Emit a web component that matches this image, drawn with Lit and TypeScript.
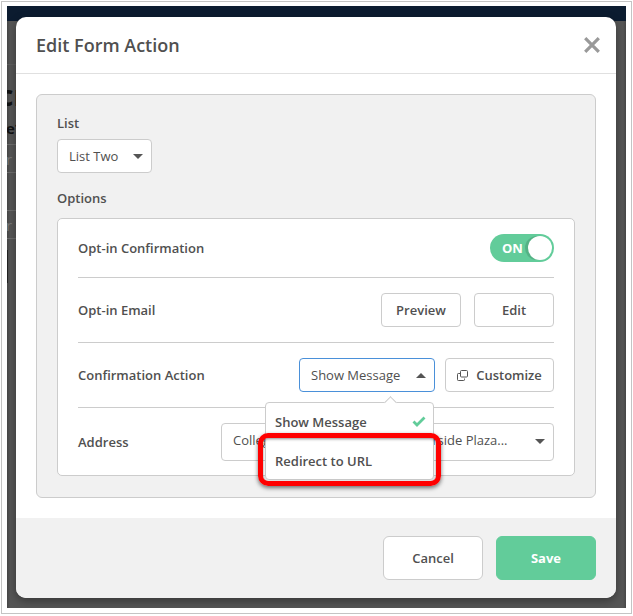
import { LitElement, css, html } from "lit";
import { customElement } from "lit/decorators.js";

const caret = (up = false) => html`<svg class="caret" width="10" height="5" viewBox="0 0 10 5"><path d=${up ? "M0 5 5 0 10 5Z" : "M0 0 5 5 10 0Z"} fill="#555"></path></svg>`;

@customElement("app-root")
export class AppRoot extends LitElement {
    static styles = css`
      :host {
        display: block;
        width: 633px;
        height: 616px;
        box-sizing: border-box;
        padding: 1px;
        background: #fff;
        font-family: "Open Sans", "Noto Sans", sans-serif;
        color: #505050;
        overflow: hidden;
      }
      .window {
        height: 613px;
        width: 631px;
        box-sizing: border-box;
        border: 1px solid #c4c4c4;
        background: #fff;
        padding: 4px 5px 5px 5px;
      }
      .backdrop {
        position: relative;
        height: 602px;
        box-sizing: border-box;
        padding: 11px 10px 10px 9px;
        background: linear-gradient(90deg, #454545, #555 3px, #555 calc(100% - 3px), #464646);
        overflow: hidden;
      }
      .navbar {
        position: absolute;
        left: 0;
        right: 0;
        top: 0;
        height: 15px;
        background: #0c1c30;
      }
      /* bits of the page behind the modal, only visible in the left gutter */
      .behind {
        position: absolute;
        white-space: nowrap;
      }
      .heading {
        left: -8px;
        top: 75px;
        font-size: 28px;
        line-height: 28px;
        font-weight: 700;
        color: #111;
      }
      .required {
        left: -1px;
        top: 113px;
        font-size: 15px;
        line-height: 18px;
        font-weight: 700;
        color: #111;
      }
      .hint {
        left: -1px;
        font-size: 15px;
        line-height: 18px;
        color: #777;
      }
      .hint-a {
        top: 144px;
      }
      .hint-b {
        top: 210px;
      }
      .rule {
        left: 0;
        width: 12px;
        height: 1px;
        background: #6c6c6c;
      }
      .r0 {
        top: 58px;
        background: #5e5e5e;
      }
      .r1 {
        top: 138px;
      }
      .r2 {
        top: 166px;
      }
      .r3 {
        top: 204px;
      }
      .r4 {
        top: 232px;
      }
      .bar {
        left: 0;
        top: 244px;
        width: 1px;
        height: 33px;
        background: #222;
      }
      .modal {
        position: relative;
        height: 581px;
        background: #fff;
        border-radius: 10px;
        display: flex;
        flex-direction: column;
        box-shadow: 0 3px 8px rgba(0, 0, 0, 0.35);
      }
      header {
        height: 57px;
        flex: none;
        box-sizing: border-box;
        padding: 0 16px 0 20px;
        border-bottom: 1px solid #e0e0e0;
        display: flex;
        align-items: center;
        justify-content: space-between;
      }
      h1 {
        margin: 0;
        font-size: 18px;
        font-weight: 600;
        color: #505050;
      }
      .body {
        flex: 1;
        padding: 20px;
      }
      .panel {
        height: 404px;
        box-sizing: border-box;
        background: #f1f1f1;
        border: 1px solid #ccc;
        border-radius: 6px;
        padding: 19px 20px 20px;
      }
      .label {
        font-size: 13px;
        font-weight: 600;
        line-height: 18px;
        color: #505050;
      }
      .select,
      .btn {
        box-sizing: border-box;
        display: flex;
        align-items: center;
        background: #fff;
        border: 1px solid #ccc;
        border-radius: 4px;
        font-size: 13px;
        color: #505050;
      }
      .select {
        justify-content: space-between;
        padding: 0 8px 0 11px;
      }
      .list {
        width: 95px;
        height: 34px;
        margin: 7px 0 16px;
      }
      .card {
        position: relative;
        margin-top: 11px;
        height: 258px;
        box-sizing: border-box;
        background: #fff;
        border: 1px solid #ccc;
        border-radius: 5px;
        padding: 0 20px;
      }
      .row {
        display: flex;
        align-items: center;
        justify-content: space-between;
        height: 65px;
        box-sizing: border-box;
        border-bottom: 1px solid #ccc;
      }
      .row:first-child {
        height: 59px;
      }
      .row:last-child {
        border-bottom: none;
        height: 67px;
      }
      .actions {
        display: flex;
        gap: 10px;
      }
      .btn {
        height: 34px;
        justify-content: center;
        font-weight: 600;
      }
      .preview,
      .edit {
        width: 80px;
      }
      .edit {
        margin-left: 3px;
      }
      .message {
        width: 136px;
        height: 34px;
        border-color: #4a90d9;
      }
      .customize {
        width: 109px;
        gap: 8px;
      }
      .address {
        width: 333px;
        height: 38px;
        padding-bottom: 4px;
      }
      .address svg {
        margin-top: 4px;
      }
      .address span {
        white-space: nowrap;
      }
      .toggle {
        width: 64px;
        height: 28px;
        box-sizing: border-box;
        border-radius: 14px;
        background: #62cc9a;
        display: flex;
        align-items: center;
        justify-content: space-between;
        padding: 0 2px 0 12px;
        color: #fff;
        font-size: 13px;
        font-weight: 700;
      }
      .knob {
        width: 24px;
        height: 24px;
        border-radius: 50%;
        background: #fff;
        box-shadow: -3px 0 0 rgba(60, 130, 95, 0.35);
      }
      .menu {
        position: absolute;
        left: 207px;
        top: 183px;
        width: 169px;
        height: 78px;
        box-sizing: border-box;
        background: #fff;
        border: 1px solid #ccc;
        border-radius: 4px;
        font-size: 13px;
        font-weight: 600;
        color: #505050;
      }
      .menu::before {
        content: "";
        position: absolute;
        left: 120px;
        top: -5px;
        width: 8px;
        height: 8px;
        background: #fff;
        border-left: 1px solid #ccc;
        border-top: 1px solid #ccc;
        transform: rotate(45deg);
      }
      .option {
        position: relative;
        height: 39px;
        box-sizing: border-box;
        padding: 0 9px;
        display: flex;
        align-items: center;
        justify-content: space-between;
      }
      .option:first-child {
        margin-top: -1px;
      }
      .option svg {
        margin-right: -2px;
      }
      .callout {
        position: absolute;
        left: 200px;
        top: 214px;
        width: 183px;
        height: 53px;
        box-sizing: border-box;
        border: 5px solid #f00;
        border-radius: 10px;
        box-shadow: 0 2px 4px rgba(0, 0, 0, 0.55), inset 0 1px 3px rgba(0, 0, 0, 0.45);
      }
      .footer {
        height: 80px;
        flex: none;
        box-sizing: border-box;
        background: #f1f1f1;
        border-radius: 0 0 10px 10px;
        display: flex;
        justify-content: flex-end;
        align-items: center;
        gap: 13px;
        padding: 0 20px;
      }
      .cancel,
      .save {
        width: 100px;
        height: 44px;
        font-size: 13px;
        border-radius: 6px;
      }
      .save {
        background: #62cc9a;
        border-color: #62cc9a;
        color: #fff;
        font-weight: 700;
      }
    `;

    render() {
        return html`
      <div class="window">
        <div class="backdrop">
          <div class="navbar"></div>
          <div class="behind heading">cr</div>
          <div class="behind required">e*</div>
          <div class="behind hint hint-a">r n</div>
          <div class="behind hint hint-b">r e</div>
          <div class="behind rule r0"></div>
          <div class="behind rule r1"></div>
          <div class="behind rule r2"></div>
          <div class="behind rule r3"></div>
          <div class="behind rule r4"></div>
          <div class="behind bar"></div>
          <div class="modal">
            <header>
              <h1>Edit Form Action</h1>
              <svg width="16" height="16" viewBox="0 0 16 16"><path d="M1.2 1.2 14.8 14.8M14.8 1.2 1.2 14.8" stroke="#999" stroke-width="3.2"></path></svg>
            </header>
            <div class="body">
              <div class="panel">
                <div class="label">List</div>
                <div class="select list"><span>List Two</span>${caret()}</div>
                <div class="label">Options</div>
                <div class="card">
                  <div class="rows">
                    <div class="row">
                      <div class="label">Opt-in Confirmation</div>
                      <div class="toggle"><span>ON</span><div class="knob"></div></div>
                    </div>
                    <div class="row">
                      <div class="label">Opt-in Email</div>
                      <div class="actions">
                        <div class="btn preview">Preview</div>
                        <div class="btn edit">Edit</div>
                      </div>
                    </div>
                    <div class="row">
                      <div class="label">Confirmation Action</div>
                      <div class="actions">
                        <div class="select message"><span>Show Message</span>${caret(true)}</div>
                        <div class="btn customize">
                          <svg width="11" height="11" viewBox="0 0 11 11" fill="none" stroke="#555" stroke-width="1"><rect x="3.5" y="0.5" width="7" height="6.5" rx="1"></rect><path d="M3 3.5H1.3A.8.8 0 0 0 .5 4.3V9.7A.8.8 0 0 0 1.3 10.5H6.7A.8.8 0 0 0 7.5 9.7V8.5"></path></svg>
                          <span>Customize</span>
                        </div>
                      </div>
                    </div>
                    <div class="row">
                      <div class="label">Address</div>
                      <div class="select address"><span>College Park Center, 1000 W Riverside Plaza...</span>${caret()}</div>
                    </div>
                  </div>
                  <div class="menu">
                    <div class="option">
                      <span>Show Message</span>
                      <svg width="14" height="11" viewBox="0 0 14 11"><path d="M1.5 5.5 5 9 12.5 1.5" fill="none" stroke="#62cc9a" stroke-width="2.8"></path></svg>
                    </div>
                    <div class="option">Redirect to URL</div>
                  </div>
                  <div class="callout"></div>
                </div>
              </div>
            </div>
            <div class="footer">
              <div class="btn cancel">Cancel</div>
              <div class="btn save">Save</div>
            </div>
          </div>
        </div>
      </div>
    `;
    }
}
